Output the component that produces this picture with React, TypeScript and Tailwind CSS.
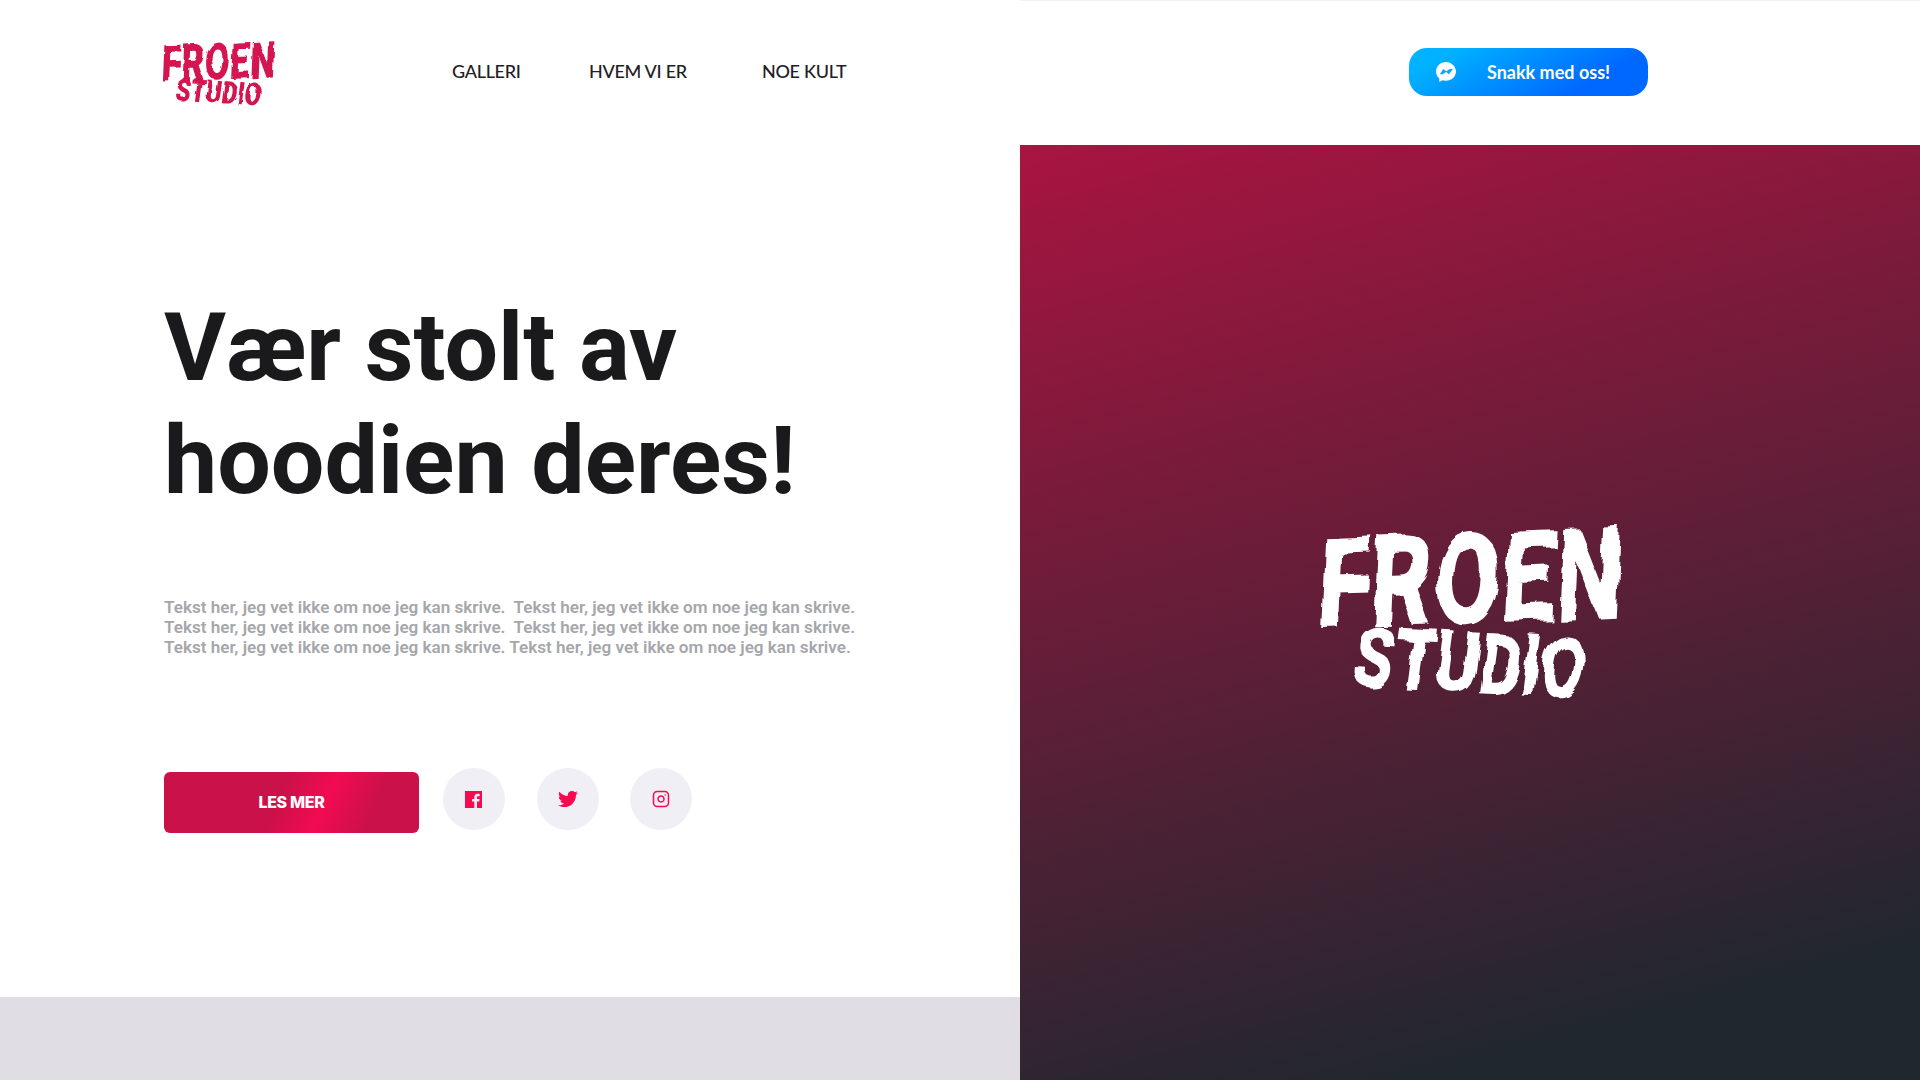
import { Instagram } from 'lucide-react';
import { FaTwitter } from 'react-icons/fa';

function Logo({ big }: { big?: boolean }) {
  if (big) {
    return (
      <div className="flex w-[298px] flex-col items-center whitespace-nowrap font-['Roboto',sans-serif] font-black text-white [filter:url(#rough-big)]">
        <div className="mt-[6px] -rotate-2 -skew-x-6 scale-x-[0.88] scale-y-[1.16] text-[110px] leading-[96px]">FROEN</div>
        <div className="rotate-3 -skew-x-6 scale-x-[0.96] scale-y-[1.25] text-[68px] leading-[72px]">STUDIO</div>
      </div>
    );
  }
  return (
    <div className="flex w-[110px] flex-col items-center whitespace-nowrap font-['Roboto',sans-serif] font-black text-[#d3124f] [filter:url(#rough-small)]">
      <div className="mt-[5px] -rotate-2 -skew-x-6 scale-x-[0.88] scale-y-[1.24] text-[41px] leading-[36px]">FROEN</div>
      <div className="rotate-3 -skew-x-6 scale-x-[0.96] scale-y-[1.25] text-[25px] leading-[25px]">STUDIO</div>
    </div>
  );
}

export default function App() {
  const links = [
    { name: 'GALLERI', cls: 'w-[137px]' },
    { name: 'HVEM VI ER', cls: 'w-[173px]' },
    { name: 'NOE KULT', cls: '' },
  ];

  return (
    <div className="flex h-[1080px] w-full overflow-hidden bg-white font-['Roboto',sans-serif]">
      {/* rough edges for the logo lettering */}
      <svg width="0" height="0" className="absolute">
        <filter id="rough-big" x="-10%" y="-10%" width="120%" height="120%">
          <feTurbulence type="fractalNoise" baseFrequency="0.035" numOctaves="2" seed="4" />
          <feDisplacementMap in="SourceGraphic" scale="11" />
        </filter>
        <filter id="rough-small" x="-10%" y="-10%" width="120%" height="120%">
          <feTurbulence type="fractalNoise" baseFrequency="0.09" numOctaves="2" seed="4" />
          <feDisplacementMap in="SourceGraphic" scale="4" />
        </filter>
      </svg>

      {/* left */}
      <div className="flex h-full w-[1020px] flex-col">
        <header className="flex h-[145px] items-start pl-[164px] pt-[39px]">
          <div className="w-[288px]"><Logo /></div>
          <nav className="flex pt-[20px] font-['Lato',sans-serif] text-[18px] font-medium leading-[24px] tracking-[-0.3px] text-[#1f2024]">
            {links.map((l) => (
              <a key={l.name} className={l.cls}>{l.name}</a>
            ))}
          </nav>
        </header>

        <main className="flex-1 pl-[164px]">
          <h1 className="mt-[146px] text-[95px] font-bold leading-[113px] text-[#1a1a1c]">
            Vær stolt av<br />hoodien deres!
          </h1>
          <p className="mt-[80px] whitespace-pre text-[17.1px] font-semibold leading-[20px] text-[#a5a7ab]">
            {'Tekst her, jeg vet ikke om noe jeg kan skrive.  Tekst her, jeg vet ikke om noe jeg kan skrive.\nTekst her, jeg vet ikke om noe jeg kan skrive.  Tekst her, jeg vet ikke om noe jeg kan skrive.\nTekst her, jeg vet ikke om noe jeg kan skrive. Tekst her, jeg vet ikke om noe jeg kan skrive.'}
          </p>
          <div className="mt-[111px] flex items-start">
            <button className="mt-[4px] h-[61px] w-[255px] rounded-[6px] bg-[linear-gradient(115deg,#cb1149_45%,#f20b52_62%,#cb1149_80%)] pb-[2px] font-['Inter',sans-serif] text-[16px] font-extrabold tracking-[-0.3px] text-white">
              LES MER
            </button>
            <div className="ml-[24px] flex gap-[31.5px]">
              <a className="flex h-[62px] w-[62px] items-center justify-center rounded-full bg-[#f1eff6] text-[#f70a50]">
                <svg className="mr-[2px]" width="17" height="17" viewBox="0 0 17 17">
                  <path fill="currentColor" d="M0 0h17v17h-5v-6.500h2.300l.3-2.600H12V6.400c0-.8.2-1.200 1.200-1.200h1.400V2.900c-.3 0-1.100-.1-2-.1-2 0-3.300 1.200-3.300 3.400v1.700H7v2.600h2.300V17H0z" />
                </svg>
              </a>
              <a className="flex h-[62px] w-[62px] items-center justify-center rounded-full bg-[#f1eff6] text-[#f70a50]">
                <FaTwitter size={20} />
              </a>
              <a className="flex h-[62px] w-[62px] items-center justify-center rounded-full bg-[#f1eff6] text-[#f70a50]">
                <Instagram size={18} strokeWidth={2} />
              </a>
            </div>
          </div>
        </main>

        <div className="h-[83px] bg-[#e1dde4]" />
      </div>

      {/* right */}
      <div className="flex h-full flex-1 flex-col">
        <div className="flex h-[145px] items-start border-t border-[#f8eef2] pl-[389px] pt-[47px]">
          <button className="flex h-[48px] w-[239px] items-center rounded-[18px] bg-[linear-gradient(150deg,#00b2ff_15%,#0068ff_75%)] pl-[27px] font-['Lato',sans-serif] text-[18px] font-bold text-white">
            <svg width="20" height="21" viewBox="0 0 20 21">
              <path fill="#fff" d="M10 0C4.500 0 0 4.200 0 9.600c0 2.900 1.200 5.300 3.300 7V20l3.100-1.700c1.100.3 2.300.5 3.600.5 5.500 0 10-4.100 10-9.200S15.500 0 10 0z" />
              <path fill="#0ea5ff" d="M3.800 12.200l3.500-5.300 3.100 2.300 3.300-2.300h3.200l-3.900 5.400-3-2.300-3.300 2.300z" />
            </svg>
            <span className="ml-[31px]">Snakk med oss!</span>
          </button>
        </div>
        <div className="flex flex-1 items-center justify-center bg-[linear-gradient(165deg,#a91441_0%,#21272f_88%)]">
          <Logo big />
        </div>
      </div>
    </div>
  );
}
